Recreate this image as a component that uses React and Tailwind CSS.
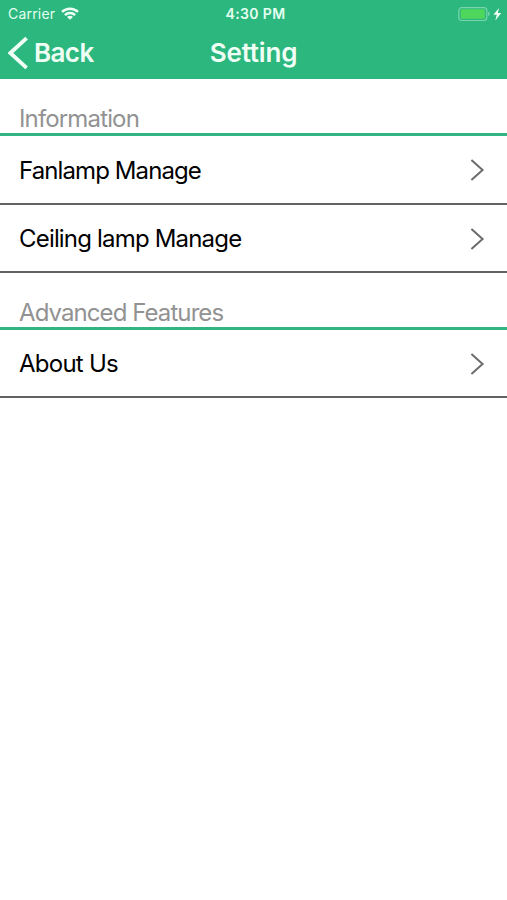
const sections = [
  {
    title: "Information",
    titleTracking: "tracking-[-0.85px]",
    items: [
      { label: "Fanlamp Manage", tracking: "tracking-[-0.9px]", height: "h-[69px]" },
      { label: "Ceiling lamp Manage", tracking: "tracking-[-0.82px]", height: "h-[68px]" },
    ],
  },
  {
    title: "Advanced Features",
    titleTracking: "tracking-[-0.92px]",
    items: [{ label: "About Us", tracking: "tracking-[-0.75px]", height: "h-[68px]" }],
  },
];

function WifiIcon() {
  return (
    <svg width="18" height="13" viewBox="0 0 18 13" fill="none" stroke="#effff5" strokeWidth="2.5">
      <path d="M1 4.9C5.4 .6 12.6 .6 17 4.9" />
      <path d="M3.9 8.1C6.7 5.3 11.3 5.3 14.1 8.1" />
      <path d="M9 12.8 6 9.9C7.7 8.4 10.3 8.4 12 9.9Z" fill="#effff5" stroke="none" />
    </svg>
  );
}

function BatteryIcon() {
  return (
    <svg width="45" height="16" viewBox="0 0 45 16" fill="none">
      <rect x="0.8" y="1.7" width="28" height="12.8" rx="3" stroke="#7ad6a8" strokeWidth="1.2" />
      <rect x="2.8" y="3.2" width="24" height="9.6" rx="1.2" fill="#4fd75c" />
      <path d="M30.2 5.8C32.1 6.4 32.1 9.6 30.2 10.2Z" fill="#83dcb0" />
      <path d="M41 2 35.4 8.8H38.8L37.3 14.4 43.2 7.1H39.8Z" fill="#f4fff8" />
    </svg>
  );
}

function StatusBar() {
  return (
    <div className="grid h-[27px] grid-cols-3 items-center pl-2 pr-1 text-[14px] leading-none text-[#e4fff0]">
      <div className="flex items-center gap-[6px]">
        <span className="tracking-[0.2px]">Carrier</span>
        <WifiIcon />
      </div>
      <span className="text-center font-semibold tracking-[0.35px]">4:30 PM</span>
      <div className="flex justify-end">
        <BatteryIcon />
      </div>
    </div>
  );
}

function NavBar() {
  return (
    <div className="grid h-[52px] grid-cols-3 items-center text-[26px] font-semibold leading-none text-[#f0fff6]">
      <button type="button" className="flex items-center gap-[6px] pl-2">
        <svg width="20" height="34" viewBox="0 0 20 34" fill="none" stroke="currentColor" strokeWidth="3.8">
          <path d="M18.6 2.2 2.4 17 18.6 31.8" />
        </svg>
        <span className="tracking-[-0.6px]">Back</span>
      </button>
      <h1 className="text-center tracking-[-0.2px]">Setting</h1>
    </div>
  );
}

function Row({ item }) {
  return (
    <li className={`flex items-center justify-between border-b-2 border-[#626262] pl-[19px] pr-[22px] pt-px ${item.height}`}>
      <span className={`pt-px text-[24px] leading-none text-black ${item.tracking}`}>{item.label}</span>
      <svg width="15" height="24" viewBox="0 0 15 24" fill="none" stroke="#6b6b6b" strokeWidth="2">
        <path d="M1.4 2 12.6 12 1.4 22" />
      </svg>
    </li>
  );
}

export default function App() {
  return (
    <div className="min-h-[900px] w-full bg-white font-['Inter','Liberation_Sans',sans-serif]">
      <header className="h-[79px] bg-[#2cb77f]">
        <StatusBar />
        <NavBar />
      </header>
      {sections.map((section) => (
        <section key={section.title}>
          <h2
            className={`flex h-[57px] items-end border-b-[3px] border-[#32b483] pb-[2px] pl-[19px] text-[24px] leading-none text-[#929292] ${section.titleTracking}`}
          >
            {section.title}
          </h2>
          <ul>
            {section.items.map((item) => (
              <Row key={item.label} item={item} />
            ))}
          </ul>
        </section>
      ))}
    </div>
  );
}
